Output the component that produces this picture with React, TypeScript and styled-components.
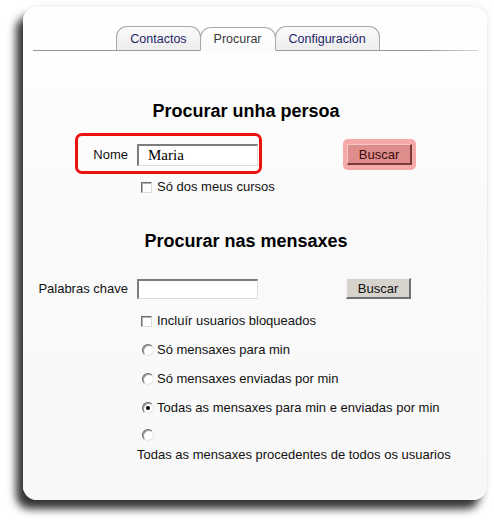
import React from "react";
import styled, { createGlobalStyle } from "styled-components";

const Global = createGlobalStyle`
  html, body {
    margin: 0;
    padding: 0;
    background: #ffffff;
  }
  body {
    font-family: "Liberation Sans", Arial, sans-serif;
    font-size: 13px;
    color: #111;
  }
`;

const Page = styled.div`
  width: 494px;
  height: 524px;
  padding: 7px 0 0 23px;
  box-sizing: border-box;
`;

const Card = styled.div`
  width: 464px;
  height: 493px;
  box-sizing: border-box;
  padding-top: 19px;
  border-radius: 14px;
  background: linear-gradient(180deg, #ffffff 0%, #fafafa 40%, #f8f8f8 100%);
  box-shadow: -7px 9px 9px rgba(0, 0, 0, 0.8), 2px -2px 6px rgba(0, 0, 0, 0.06);
`;

const TabBar = styled.div`
  margin: 0 9px 0 10px;
  padding-right: 15px;
  display: flex;
  justify-content: center;
  align-items: flex-end;
  height: 24px;
  border-bottom: 1px solid;
  border-image: linear-gradient(90deg, #9a9a9a 0%, #9a9a9a 88%, #d8d8d8 100%) 1;
`;

const Tab = styled.div<{ $active?: boolean }>`
  height: 24px;
  margin-bottom: ${(p) => (p.$active ? "-1px" : "0")};
  padding: 0 13px;
  box-sizing: border-box;
  display: flex;
  align-items: center;
  font-size: 12.5px;
  color: ${(p) => (p.$active ? "#3a3a3a" : "#1f1f6a")};
  border: 1px solid #a8a8a8;
  border-bottom: ${(p) => (p.$active ? "1px solid #fafafa" : "none")};
  border-radius: 11px 11px 0 0;
  background: ${(p) =>
    p.$active
      ? "linear-gradient(180deg, #ffffff 0%, #fafafa 100%)"
      : "linear-gradient(180deg, #fbfbfb 0%, #ececec 100%)"};
  & + & {
    margin-left: -1px;
  }
`;

const Content = styled.div`
  padding-right: 18px;
`;

const Heading = styled.h2<{ $top: number }>`
  margin: ${(p) => p.$top}px 0 0 0;
  text-align: center;
  font-size: 18px;
  line-height: 20px;
  font-weight: bold;
  color: #000;
`;

const Row = styled.div<{ $top: number }>`
  margin-top: ${(p) => p.$top}px;
  display: flex;
  align-items: center;
`;

const Highlight = styled.div`
  position: relative;
  display: flex;
  align-items: center;
  &::before {
    content: "";
    position: absolute;
    left: 52px;
    right: 84px;
    top: -11px;
    bottom: -8px;
    border: 3px solid #ee1111;
    border-radius: 7px;
    pointer-events: none;
  }
`;

const Label = styled.label`
  width: 114px;
  padding-right: 9px;
  box-sizing: border-box;
  text-align: right;
  color: #111;
`;

const Field = styled.div`
  width: 209px;
`;

const TextInput = styled.input<{ $serif?: boolean }>`
  width: 121px;
  height: ${(p) => (p.$serif ? "22px" : "20px")};
  box-sizing: border-box;
  padding: 0 0 0 9px;
  background: #fff;
  border-style: solid;
  border-width: 2px 1px 1px 2px;
  border-color: #7c7c7c #dcdcdc #dcdcdc #7c7c7c;
  font-family: ${(p) =>
    p.$serif ? '"Liberation Serif", "Times New Roman", serif' : '"Liberation Sans", Arial, sans-serif'};
  font-size: 15px;
  color: #000;
  outline: none;
`;

const Glow = styled.div`
  padding: 5px 4px;
  margin-left: -3px;
  border-radius: 5px;
  background: #f6a9a9;
`;

const Button = styled.button<{ $marked?: boolean }>`
  width: 65px;
  height: 21px;
  padding: 0;
  font-family: "Liberation Sans", Arial, sans-serif;
  font-size: 13px;
  color: ${(p) => (p.$marked ? "#3a0d0d" : "#111")};
  background: ${(p) => (p.$marked ? "#df8c8c" : "#d6d3cc")};
  border-style: solid;
  border-width: 1px 2px 2px 1px;
  border-color: ${(p) =>
    p.$marked ? "#f4c6c6 #7a3a3a #7a3a3a #f4c6c6" : "#f4f4f4 #707070 #707070 #f4f4f4"};
`;

const Option = styled.div<{ $top: number }>`
  margin: ${(p) => p.$top}px 0 0 114px;
  display: flex;
  align-items: center;
  line-height: 16px;
  height: 16px;
  white-space: nowrap;
`;

const OptionText = styled.div<{ $top: number }>`
  margin: ${(p) => p.$top}px 0 0 114px;
  line-height: 16px;
  white-space: nowrap;
`;

const Check = styled.input.attrs({ type: "checkbox" })`
  appearance: none;
  width: 11px;
  height: 11px;
  margin: 0 5px 0 4px;
  background: #fff;
  border-style: solid;
  border-width: 1px;
  border-color: #6e6e6e #dcdcdc #dcdcdc #6e6e6e;
  box-shadow: inset 1px 1px 0 #b0b0b0;
`;

const Radio = styled.input.attrs({ type: "radio" })`
  appearance: none;
  width: 12px;
  height: 12px;
  margin: 0 3px 0 5px;
  border-radius: 50%;
  background: #fff;
  border: 1px solid;
  border-color: #6a6a6a #e6e6e6 #e6e6e6 #6a6a6a;
  box-shadow: inset 1px 1px 0 #9a9a9a;
  display: grid;
  place-items: center;
  &:checked::after {
    content: "";
    width: 4px;
    height: 4px;
    border-radius: 50%;
    background: #000;
  }
`;

export default function App() {
  return (
    <>
      <Global />
      <Page>
        <Card>
          <TabBar>
            <Tab>Contactos</Tab>
            <Tab $active>Procurar</Tab>
            <Tab>Configuración</Tab>
          </TabBar>
          <Content>
            <Heading $top={50}>Procurar unha persoa</Heading>
            <Row $top={18}>
              <Highlight>
                <Label>Nome</Label>
                <Field>
                  <TextInput $serif defaultValue="Maria" />
                </Field>
              </Highlight>
              <Glow>
                <Button $marked>Buscar</Button>
              </Glow>
            </Row>
            <Option $top={9}>
              <Check />
              Só dos meus cursos
            </Option>

            <Heading $top={36}>Procurar nas mensaxes</Heading>
            <Row $top={27}>
              <Label>Palabras chave</Label>
              <Field>
                <TextInput />
              </Field>
              <Button>Buscar</Button>
            </Row>
            <Option $top={14}>
              <Check />
              Incluír usuarios bloqueados
            </Option>
            <Option $top={13}>
              <Radio name="opt" />
              Só mensaxes para min
            </Option>
            <Option $top={13}>
              <Radio name="opt" />
              Só mensaxes enviadas por min
            </Option>
            <Option $top={13}>
              <Radio name="opt" defaultChecked />
              Todas as mensaxes para min e enviadas por min
            </Option>
            <Option $top={11}>
              <Radio name="opt" />
            </Option>
            <OptionText $top={4}>Todas as mensaxes procedentes de todos os usuarios</OptionText>
          </Content>
        </Card>
      </Page>
    </>
  );
}
